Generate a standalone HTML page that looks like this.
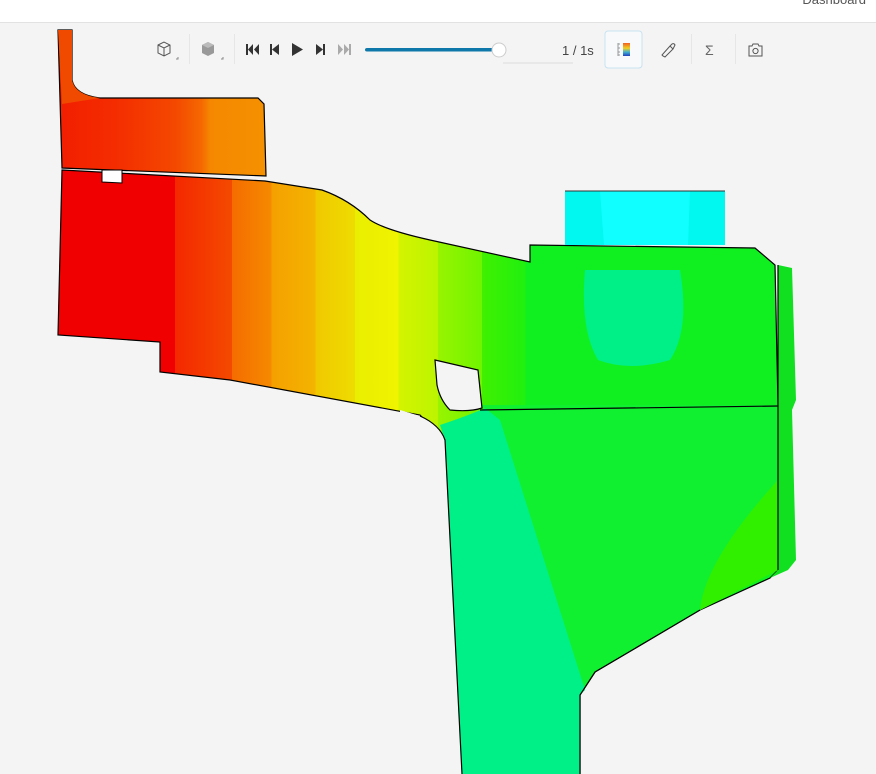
<!DOCTYPE html>
<html><head><style>
html,body{margin:0;padding:0;width:876px;height:774px;overflow:hidden;background:#f4f4f4;font-family:"Liberation Sans",sans-serif}
#top{position:absolute;left:0;top:0;width:876px;height:22px;background:#fff;border-bottom:1px solid #e2e2e2}
#top span{position:absolute;right:10px;top:-8px;font-size:13px;color:#555}
svg{position:absolute;left:0;top:0}
.tb{position:absolute;top:32px;height:36px}
.sep{position:absolute;top:34px;width:1px;height:30px;background:#e6e6e6}
</style></head><body>
<div id="top"><span>Dashboard</span></div>
<svg width="876" height="774" viewBox="0 0 876 774">
<defs>
<linearGradient id="g" x1="0" x2="876" y1="0" y2="0" gradientUnits="userSpaceOnUse">
<stop offset="0" stop-color="#f00000"/><stop offset=".2" stop-color="#f00000"/>
<stop offset=".2" stop-color="#f42800"/><stop offset=".265" stop-color="#f44a00"/>
<stop offset=".265" stop-color="#f56c00"/><stop offset=".31" stop-color="#f58a00"/>
<stop offset=".31" stop-color="#f5a000"/><stop offset=".36" stop-color="#f4b400"/>
<stop offset=".36" stop-color="#f0c800"/><stop offset=".405" stop-color="#eedc00"/>
<stop offset=".405" stop-color="#eaee00"/><stop offset=".455" stop-color="#f0f400"/>
<stop offset=".455" stop-color="#d4f400"/><stop offset=".5" stop-color="#bcf400"/>
<stop offset=".5" stop-color="#98f400"/><stop offset=".55" stop-color="#70f400"/>
<stop offset=".55" stop-color="#40f000"/><stop offset=".6" stop-color="#20f010"/>
<stop offset=".6" stop-color="#10f020"/><stop offset="1" stop-color="#10f020"/>
</linearGradient>
<linearGradient id="g2" x1="0" x2="876" gradientUnits="userSpaceOnUse">
<stop offset="0" stop-color="#f01000"/><stop offset=".13" stop-color="#f42c00"/>
<stop offset=".2" stop-color="#f44800"/><stop offset=".23" stop-color="#f56800"/>
<stop offset=".24" stop-color="#f58800"/><stop offset=".3" stop-color="#f59000"/>
</linearGradient>
</defs>
<!-- upper-left block -->
<path d="M58,30 L72,30 L72,80 Q75,95 100,98 L258,98 L264,104 L266,176 L62,168 Z" fill="url(#g2)" stroke="#000" stroke-width="1.2"/>
<path d="M58,30 L72,30 L72,80 Q75,95 100,98 L62,104 Z" fill="#f04a00"/>
<!-- main body -->
<path d="M62,170 L265,181 L322,190 Q350,200 370,220 Q385,230 430,240 L530,262 L530,245 L755,248 L775,265 L778,405 L778,570 L770,578 L700,610 L595,672 L580,695 L580,774 L462,774 L445,440 Q430,425 420,415 L230,380 L160,372 L160,342 L58,335 Z" fill="url(#g)" stroke="#000" stroke-width="1.2"/>
<!-- right edge strip -->
<path d="M778,265 L792,268 L796,400 L792,410 L796,560 L788,570 L770,578 L778,570 Z" fill="#10e020"/>
<!-- upper right blob -->
<path d="M585,270 L680,270 Q690,330 670,360 Q630,372 598,360 Q580,330 585,270 Z" fill="#00f088"/>
<!-- lower right green block -->
<path d="M480,405 L778,405 L778,570 L700,610 L595,672 L580,695 L560,690 L500,420 Z" fill="#10f030"/>
<path d="M778,480 L778,570 L700,610 Q705,560 778,480 Z" fill="#30f000"/>
<!-- neck -->
<path d="M440,425 Q470,415 485,408 L500,420 L585,690 L580,695 L580,774 L462,774 L445,440 Z" fill="#00f088"/>
<path d="M480,410 L778,406" stroke="#000" stroke-width="1.2" fill="none"/>
<path d="M700,610 L595,672 L580,695 L580,774" stroke="#000" stroke-width="1.2" fill="none"/>
<path d="M778,265 L778,570" stroke="#000" stroke-width="1.2"/>
<!-- cylinder -->
<path d="M565,191 L725,191 L725,245 L565,245 Z" fill="#00f8f0"/>
<path d="M600,191 L690,191 L688,245 L604,245 Z" fill="#10ffff"/>
<path d="M565,191 L725,191" stroke="#333" stroke-width="1"/>
<!-- holes -->
<path d="M102,170 L122,170 L122,183 L102,182 Z" fill="#fff" stroke="#000" stroke-width="1"/>
<path d="M435,360 L478,370 L482,408 Q470,412 450,410 Q440,400 437,385 Z" fill="#f4f4f4" stroke="#000" stroke-width="1.2"/>
<path d="M400,774 L400,410 L420,416 Q440,425 445,440 L462,774 Z" fill="#f4f4f4"/>
<path d="M420,416 Q440,425 445,440 L462,774" stroke="#000" stroke-width="1.2" fill="none"/>
<!-- toolbar icons -->
<g stroke="#555" fill="none" stroke-width="1">
<path d="M158,45 L164,42 L170,45 L170,53 L164,56 L158,53 Z M158,45 L164,48 L170,45 M164,48 L164,56"/>
<path d="M176,59 L178,59 L178,57 M221,59 L223,59 L223,57" stroke="#888"/>
</g>
<path d="M202,45 L208,42 L214,45 L214,53 L208,56 L202,53 Z" fill="#999"/>
<path d="M202,45 L208,48 L214,45 L208,42 Z" fill="#bbb"/>
<g fill="#333">
<rect x="246" y="44" width="2" height="11"/><path d="M253,44 L248,49.5 L253,55 Z M259,44 L254,49.5 L259,55 Z"/>
<rect x="270" y="44" width="2" height="11"/><path d="M279,44 L272,49.5 L279,55 Z"/>
<path d="M292,43 L303,49.5 L292,56 Z"/>
<path d="M316,44 L323,49.5 L316,55 Z"/><rect x="323" y="44" width="2" height="11"/>
</g>
<g fill="#aaa"><path d="M338,44 L343,49.5 L338,55 Z M344,44 L349,49.5 L344,55 Z"/><rect x="349" y="44" width="2" height="11"/></g>
<rect x="365" y="48" width="134" height="3.5" rx="2" fill="#0e78aa"/>
<circle cx="499" cy="50" r="7" fill="#fff" stroke="#ccc"/>
<path d="M503,63 L573,63" stroke="#ddd"/>
<text x="562" y="55" font-size="13" fill="#444" font-family="Liberation Sans">1 / 1s</text>
<rect x="605" y="31" width="37" height="37" rx="3" fill="#f7f9fb" stroke="#c8e2f0"/>
<defs><linearGradient id="cb" x1="0" x2="0" y1="0" y2="1"><stop offset="0" stop-color="#f06020"/><stop offset=".4" stop-color="#f0d020"/><stop offset=".7" stop-color="#40b0d0"/><stop offset="1" stop-color="#2040c0"/></linearGradient></defs>
<rect x="623" y="43" width="7" height="13" fill="url(#cb)"/>
<path d="M618,43 L618,56 M618,44 L620,44 M618,48 L620,48 M618,52 L620,52 M618,55 L620,55" stroke="#999"/>
<path d="M663,56 L662,55 L670,46 L673,49 L665,57 Z M670,46 L672,44 Q674,43 675,45 L673,49" stroke="#555" fill="none"/>
<text x="705" y="55" font-size="14" fill="#666">Σ</text>
<path d="M749,46 L752,46 L753,44 L758,44 L759,46 L762,46 L762,56 L749,56 Z" fill="none" stroke="#555"/>
<circle cx="755.5" cy="51" r="2.6" fill="none" stroke="#555"/>
</svg>
<div class="sep" style="left:189px"></div><div class="sep" style="left:234px"></div>
<div class="sep" style="left:691px"></div><div class="sep" style="left:735px"></div>
</body></html>
